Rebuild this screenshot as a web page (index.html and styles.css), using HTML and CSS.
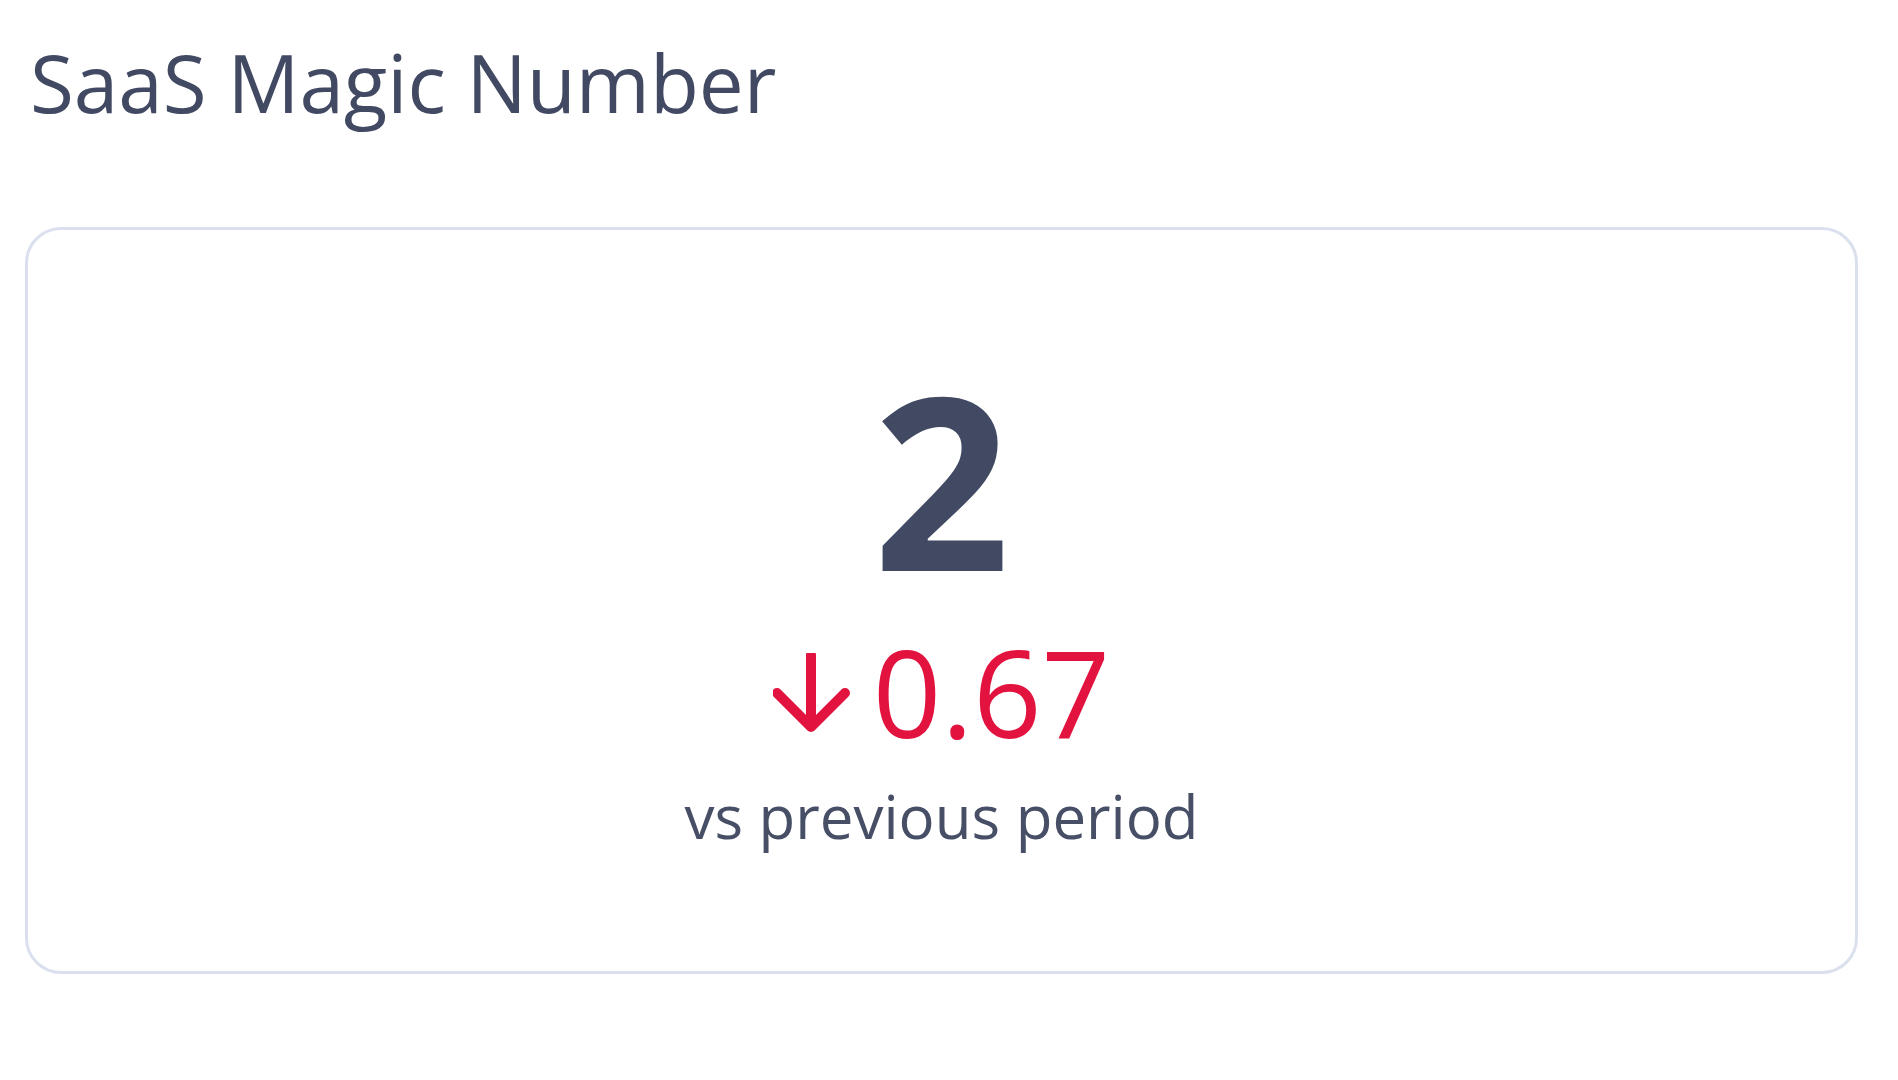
FILE: index.html
```html
<!DOCTYPE html>
<html lang="en">
<head>
<meta charset="utf-8">
<title>SaaS Magic Number</title>
<link rel="stylesheet" href="styles.css">
</head>
<body>
<main class="widget">
  <h1 class="widget-title">SaaS Magic Number</h1>
  <section class="metric-card">
    <div class="metric-value">2</div>
    <div class="metric-delta">
      <svg class="delta-icon" viewBox="0 0 80 80" aria-hidden="true">
        <path d="M38 2 V72 M4 40 L38 74 L72 40" fill="none" stroke="currentColor" stroke-width="10" stroke-linecap="round" stroke-linejoin="round"/>
      </svg>
      <span class="delta-text">0.67</span>
    </div>
    <div class="metric-caption">vs previous period</div>
  </section>
</main>
</body>
</html>
```
FILE: styles.css
```css
html, body {
  margin: 0;
  padding: 0;
  background: #ffffff;
}

body {
  font-family: "Open Sans", "Noto Sans", sans-serif;
  color: #414a62;
}

.widget {
  padding: 42px 40px 0 25px;
}

.widget-title {
  margin: 0 0 105px 5px;
  font-size: 80px;
  font-weight: 500;
  line-height: 1;
  color: #414a62;
}

.metric-card {
  box-sizing: border-box;
  height: 747px;
  border: 3px solid #dbe0ee;
  border-radius: 36px;
  display: flex;
  flex-direction: column;
  align-items: center;
  justify-content: center;
  gap: 34px;
  padding-top: 2px;
}

.metric-value {
  font-size: 240px;
  font-weight: 700;
  line-height: 1;
  color: #414a62;
}

.metric-delta {
  display: flex;
  align-items: center;
  gap: 20px;
  color: #e3133f;
}

.delta-icon {
  width: 80px;
  height: 80px;
  margin-top: 2px;
}

.delta-text {
  font-size: 120px;
  font-weight: 400;
  line-height: 1;
}

.metric-caption {
  font-size: 60px;
  font-weight: 500;
  line-height: 1;
  color: #464f66;
}
```
